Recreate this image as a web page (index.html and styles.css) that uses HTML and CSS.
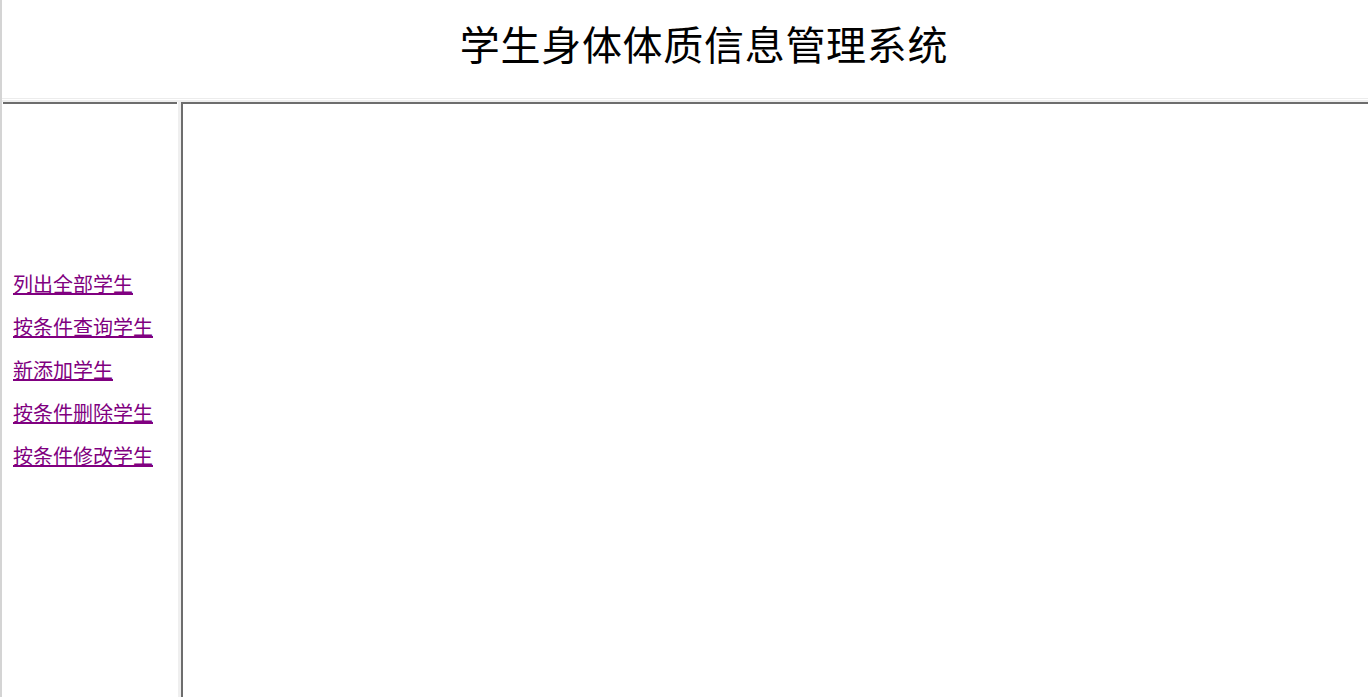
FILE: index.html
```html
<!DOCTYPE html>
<html lang="zh-CN">
<head>
<meta charset="utf-8">
<title>学生身体体质信息管理系统</title>
<link rel="stylesheet" href="styles.css">
</head>
<body>
<div class="page">
  <header class="top">
    <h1 class="title">学生身体体质信息管理系统</h1>
  </header>
  <div class="hsep"></div>
  <div class="main">
    <nav class="left">
      <p class="item"><a class="link" href="#">列出全部学生</a></p>
      <p class="item"><a class="link" href="#">按条件查询学生</a></p>
      <p class="item"><a class="link" href="#">新添加学生</a></p>
      <p class="item"><a class="link" href="#">按条件删除学生</a></p>
      <p class="item"><a class="link" href="#">按条件修改学生</a></p>
    </nav>
    <div class="vsep"></div>
    <section class="right"></section>
  </div>
</div>
</body>
</html>
```

FILE: styles.css
```css
html, body {
  margin: 0;
  padding: 0;
  height: 100%;
  overflow: hidden;
  background: #fff;
}

.page {
  display: flex;
  flex-direction: column;
  height: 697px;
  border-left: 2px solid #d4d4d4;
  font-family: "Liberation Serif", "Noto Sans CJK SC", serif;
}

.top {
  height: 99px;
  flex: 0 0 auto;
  box-sizing: border-box;
  border-bottom: 1px solid #ececec;
  display: flex;
  align-items: center;
  justify-content: center;
  padding-left: 38px;
}

.title {
  margin: 0;
  font-size: 40px;
  font-weight: normal;
  line-height: 48px;
  letter-spacing: 0.7px;
  color: #000;
  padding-bottom: 4px;
}

.hsep {
  flex: 0 0 auto;
  height: 1px;
  border-bottom: 2px solid #efefef;
}

.main {
  flex: 1;
  display: flex;
  min-height: 0;
}

.left {
  width: 174px;
  margin-left: 1px;
  border-top: 2px solid #6d6d6d;
  padding: 170px 0 0 10px;
  box-sizing: border-box;
}

.item {
  margin: 0 0 20px 0;
  font-size: 20px;
  line-height: 23px;
  white-space: nowrap;
}

.link {
  color: #800080;
  text-decoration: underline;
}

.vsep {
  width: 3px;
  border-left: 1px solid #fff;
  background: #efefef;
  flex: 0 0 auto;
}

.right {
  flex: 1;
  border-top: 2px solid #6d6d6d;
  border-left: 2px solid #6d6d6d;
}
```
